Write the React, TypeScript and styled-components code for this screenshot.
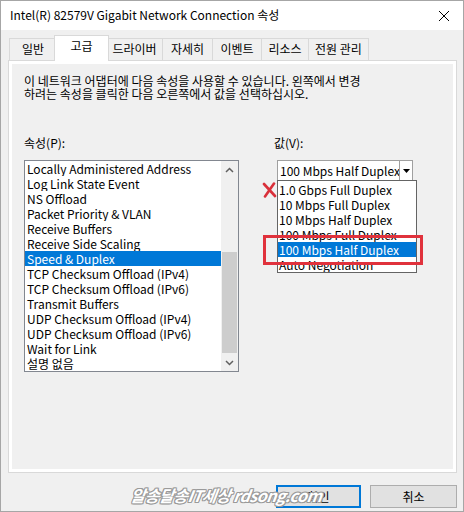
import styled, { createGlobalStyle, css } from "styled-components";

const Global = createGlobalStyle`
  html, body {
    margin: 0;
    padding: 0;
    background: #f0f0f0;
  }
  * {
    box-sizing: border-box;
  }
`;

const UI_FONT = `"Noto Sans CJK KR", "Noto Sans", sans-serif`;

const Window = styled.div`
  width: 464px;
  height: 512px;
  border: 1px solid #a6a6a6;
  display: flex;
  flex-direction: column;
  font-family: ${UI_FONT};
  font-size: 12px;
  color: #000;
  background: #f0f0f0;
  overflow: hidden;
`;

const TitleBar = styled.div`
  height: 29px;
  flex: none;
  background: #fff;
  display: flex;
  align-items: center;
  justify-content: space-between;
  padding: 0 4px 0 9px;
`;

const Title = styled.span`
  font-size: 12px;
  line-height: 16px;
  margin-top: -2px;
`;

const Body = styled.div`
  flex: 1;
  display: flex;
  flex-direction: column;
  padding: 0 6px 0 7px;
  position: relative;
`;

const TabStrip = styled.div`
  height: 30px;
  flex: none;
  display: flex;
  align-items: flex-end;
  padding-left: 2px;
`;

const Tab = styled.div<{ $w: number; $active?: boolean }>`
  width: ${(p) => p.$w}px;
  height: 22px;
  border: 1px solid #d9d9d9;
  border-bottom: none;
  margin-left: -1px;
  background: #f0f0f0;
  display: flex;
  align-items: center;
  justify-content: center;
  line-height: 14px;
  padding-bottom: 1px;
  ${(p) =>
    p.$active &&
    css`
      height: 26px;
      margin: 0 -2px -1px -3px;
      background: #fff;
      position: relative;
      z-index: 1;
      align-items: flex-start;
      padding-top: 3px;
    `}
`;

const Pane = styled.div`
  flex: 1;
  border: 1px solid #d9d9d9;
  background: #fff;
  padding: 3px;
  display: flex;
`;

const Page = styled.div`
  flex: 1;
  background: #f0f0f0;
  padding: 10px 12px;
  display: flex;
  flex-direction: column;
`;

const Desc = styled.p`
  margin: 0;
  line-height: 13px;
`;

const Fields = styled.div`
  margin-top: 35px;
  display: grid;
  grid-template-columns: 215px 1fr;
  column-gap: 35px;
`;

const Column = styled.div`
  display: flex;
  flex-direction: column;
  align-items: flex-start;
`;

const Label = styled.div`
  line-height: 15px;
  margin-bottom: 10px;
`;

const ListBox = styled.div`
  width: 215px;
  height: 212px;
  border: 1px solid #828790;
  background: #fff;
  display: flex;
`;

const Items = styled.div`
  width: 196px;
  display: flex;
  flex-direction: column;
`;

const Item = styled.div<{ $selected?: boolean }>`
  height: 15px;
  line-height: 15px;
  padding-left: 2px;
  white-space: nowrap;
  overflow: hidden;
  ${(p) =>
    p.$selected &&
    css`
      background: #0078d7;
      color: #fff;
    `}
`;

const ScrollBar = styled.div`
  width: 17px;
  display: flex;
  flex-direction: column;
  background: #f0f0f0;
`;

const Arrow = styled.div`
  height: 17px;
  flex: none;
  display: flex;
  align-items: center;
  justify-content: center;
`;

const Track = styled.div`
  flex: 1;
  display: flex;
  flex-direction: column;
`;

const Thumb = styled.div`
  margin: 74px 1px 0 1px;
  height: 101px;
  background: #cdcdcd;
`;

const ComboWrap = styled.div`
  margin-left: 3px;
  position: relative;
`;

const Combo = styled.div`
  width: 136px;
  height: 21px;
  border: 1px solid #a0a0a0;
  background: #fff;
  display: flex;
`;

const ComboText = styled.div`
  flex: 1;
  overflow: hidden;
  white-space: nowrap;
  line-height: 19px;
  padding-left: 2px;
`;

const ComboButton = styled.div`
  width: 13px;
  flex: none;
  border-left: 1px solid #a0a0a0;
  display: flex;
  align-items: center;
  justify-content: center;
`;

const DropList = styled.div`
  position: absolute;
  left: 0;
  top: 20px;
  width: 140px;
  height: 93px;
  border: 1px solid #646464;
  background: #fff;
  padding-top: 1px;
  display: flex;
  flex-direction: column;
  z-index: 2;
`;

const DropItem = styled(Item)`
  padding-left: 1px;
`;

const RedBox = styled.div`
  position: absolute;
  left: -14px;
  top: 75px;
  width: 160px;
  height: 30px;
  border: 3px solid #e0323c;
  z-index: 3;
`;

const RedX = styled.svg`
  position: absolute;
  left: -15px;
  top: 22px;
  z-index: 3;
`;

const Footer = styled.div`
  height: 38px;
  flex: none;
  padding-top: 12px;
  display: flex;
  justify-content: flex-end;
  align-items: flex-start;
  gap: 9px;
  position: relative;
`;

const Button = styled.div<{ $primary?: boolean; $w: number }>`
  width: ${(p) => p.$w}px;
  height: 23px;
  border: 1px solid #adadad;
  background: #e1e1e1;
  display: flex;
  align-items: center;
  justify-content: center;
  line-height: 14px;
  ${(p) =>
    p.$primary &&
    css`
      border-color: #0078d7;
      box-shadow: inset 0 0 0 1px #0078d7;
    `}
`;

const Watermark = styled.span`
  position: absolute;
  left: 123px;
  top: 10px;
  font-family: ${UI_FONT};
  font-weight: bold;
  font-style: italic;
  font-size: 16px;
  letter-spacing: -0.5px;
  color: #fff;
  white-space: nowrap;
  z-index: 4;
  text-shadow: 1px 0 0 #9a9a9a, -1px 0 0 #9a9a9a, 0 1px 0 #9a9a9a,
    0 -1px 0 #9a9a9a, 1px 1px 0 #9a9a9a, -1px -1px 0 #9a9a9a,
    1px -1px 0 #9a9a9a, -1px 1px 0 #9a9a9a;
  transform: skewX(-8deg);
`;

const tabs = [
  { label: "일반", w: 48 },
  { label: "고급", w: 55 },
  { label: "드라이버", w: 57 },
  { label: "자세히", w: 51 },
  { label: "이벤트", w: 50 },
  { label: "리소스", w: 48 },
  { label: "전원 관리", w: 61 },
];

const properties = [
  "Locally Administered Address",
  "Log Link State Event",
  "NS Offload",
  "Packet Priority & VLAN",
  "Receive Buffers",
  "Receive Side Scaling",
  "Speed & Duplex",
  "TCP Checksum Offload (IPv4)",
  "TCP Checksum Offload (IPv6)",
  "Transmit Buffers",
  "UDP Checksum Offload (IPv4)",
  "UDP Checksum Offload (IPv6)",
  "Wait for Link",
  "설명 없음",
];

const speeds = [
  "1.0 Gbps Full Duplex",
  "10 Mbps Full Duplex",
  "10 Mbps Half Duplex",
  "100 Mbps Full Duplex",
  "100 Mbps Half Duplex",
  "Auto Negotiation",
];

export default function App() {
  return (
    <>
      <Global />
      <Window>
        <TitleBar>
          <Title>Intel(R) 82579V Gigabit Network Connection 속성</Title>
          <svg width="30" height="20" viewBox="0 0 30 20">
            <path d="M10 5 L20 15 M20 5 L10 15" stroke="#000" strokeWidth="1" />
          </svg>
        </TitleBar>
        <Body>
          <TabStrip>
            {tabs.map((t) => (
              <Tab key={t.label} $w={t.w} $active={t.label === "고급"}>
                {t.label}
              </Tab>
            ))}
          </TabStrip>
          <Pane>
            <Page>
              <Desc>
                이 네트워크 어댑터에 다음 속성을 사용할 수 있습니다. 왼쪽에서 변경
                <br />
                하려는 속성을 클릭한 다음 오른쪽에서 값을 선택하십시오.
              </Desc>
              <Fields>
                <Column>
                  <Label>속성(P):</Label>
                  <ListBox>
                    <Items>
                      {properties.map((p) => (
                        <Item key={p} $selected={p === "Speed & Duplex"}>
                          {p}
                        </Item>
                      ))}
                    </Items>
                    <ScrollBar>
                      <Arrow>
                        <svg width="9" height="6" viewBox="0 0 9 6">
                          <path d="M1 5 L4.5 1.5 L8 5" stroke="#606060" strokeWidth="1.5" fill="none" />
                        </svg>
                      </Arrow>
                      <Track>
                        <Thumb />
                      </Track>
                      <Arrow>
                        <svg width="9" height="6" viewBox="0 0 9 6">
                          <path d="M1 1 L4.5 4.5 L8 1" stroke="#606060" strokeWidth="1.5" fill="none" />
                        </svg>
                      </Arrow>
                    </ScrollBar>
                  </ListBox>
                </Column>
                <Column>
                  <Label>값(V):</Label>
                  <ComboWrap>
                    <Combo>
                      <ComboText>100 Mbps Half Duplex</ComboText>
                      <ComboButton>
                        <svg width="7" height="4" viewBox="0 0 7 4">
                          <path d="M0 0 H7 L3.5 4 Z" fill="#000" />
                        </svg>
                      </ComboButton>
                    </Combo>
                    <DropList>
                      {speeds.map((s) => (
                        <DropItem key={s} $selected={s === "100 Mbps Half Duplex"}>
                          {s}
                        </DropItem>
                      ))}
                    </DropList>
                    <RedX width="15" height="16" viewBox="0 0 15 16">
                      <path d="M2 2 L13 14 M12 1.5 L3 14.5" stroke="#d9303a" strokeWidth="2.6" strokeLinecap="round" />
                    </RedX>
                    <RedBox />
                  </ComboWrap>
                </Column>
              </Fields>
            </Page>
          </Pane>
          <Footer>
            <Watermark>알송달송IT세상 rdsong.com</Watermark>
            <Button $primary $w={85}>
              확인
            </Button>
            <Button $w={87}>취소</Button>
          </Footer>
        </Body>
      </Window>
    </>
  );
}
